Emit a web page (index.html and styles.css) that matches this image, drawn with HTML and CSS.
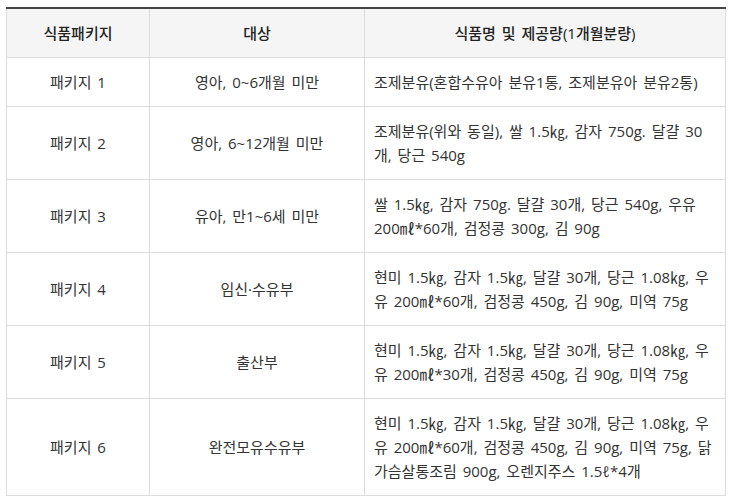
FILE: index.html
```html
<!DOCTYPE html>
<html lang="ko">
<head>
<meta charset="utf-8">
<link rel="stylesheet" href="styles.css">
</head>
<body>
<div class="wrap">
<table class="pkg">
  <colgroup>
    <col class="c1"><col class="c2"><col class="c3">
  </colgroup>
  <thead>
    <tr><th>식품패키지</th><th>대상</th><th>식품명 및 제공량(1개월분량)</th></tr>
  </thead>
  <tbody>
    <tr><td class="ct">패키지 1</td><td class="ct">영아, 0~6개월 미만</td><td>조제분유(혼합수유아 분유1통, 조제분유아 분유2통)</td></tr>
    <tr><td class="ct">패키지 2</td><td class="ct">영아, 6~12개월 미만</td><td>조제분유(위와 동일), 쌀 1.5㎏, 감자 750g. 달걀 30개, 당근 540g</td></tr>
    <tr><td class="ct">패키지 3</td><td class="ct">유아, 만1~6세 미만</td><td>쌀 1.5㎏, 감자 750g. 달걀 30개, 당근 540g, 우유 200㎖*60개, 검정콩 300g, 김 90g</td></tr>
    <tr><td class="ct">패키지 4</td><td class="ct">임신·수유부</td><td>현미 1.5㎏, 감자 1.5㎏, 달걀 30개, 당근 1.08㎏, 우유 200㎖*60개, 검정콩 450g, 김 90g, 미역 75g</td></tr>
    <tr><td class="ct">패키지 5</td><td class="ct">출산부</td><td>현미 1.5㎏, 감자 1.5㎏, 달걀 30개, 당근 1.08㎏, 우유 200㎖*30개, 검정콩 450g, 김 90g, 미역 75g</td></tr>
    <tr><td class="ct">패키지 6</td><td class="ct">완전모유수유부</td><td>현미 1.5㎏, 감자 1.5㎏, 달걀 30개, 당근 1.08㎏, 우유 200㎖*60개, 검정콩 450g, 김 90g, 미역 75g, 닭가슴살통조림 900g, 오렌지주스 1.5ℓ*4개</td></tr>
  </tbody>
</table>
</div>
</body>
</html>
```
FILE: styles.css
```css
html, body {
  margin: 0;
  padding: 0;
  background: #fff;
}
.wrap {
  padding: 7px 0 0 6px;
}
.pkg {
  border-collapse: collapse;
  table-layout: fixed;
  width: 719px;
  font-family: "Open Sans", "Noto Sans CJK KR", sans-serif;
  font-size: 15px;
  line-height: 24px;
  color: #333;
  word-spacing: 2px;
  word-break: normal;
}
.c1 { width: 143px; }
.c2 { width: 215px; }
.c3 { width: 361px; }
.pkg th, .pkg td {
  border: 1px solid #dcdcdc;
  padding: 12px 9px;
  vertical-align: middle;
}
.pkg thead th {
  border-top: 2px solid #444;
  background: #f5f5f5;
  font-weight: 500;
  color: #222;
  text-align: center;
}
.pkg td { text-align: left; }
.pkg td.ct { text-align: center; }
```
